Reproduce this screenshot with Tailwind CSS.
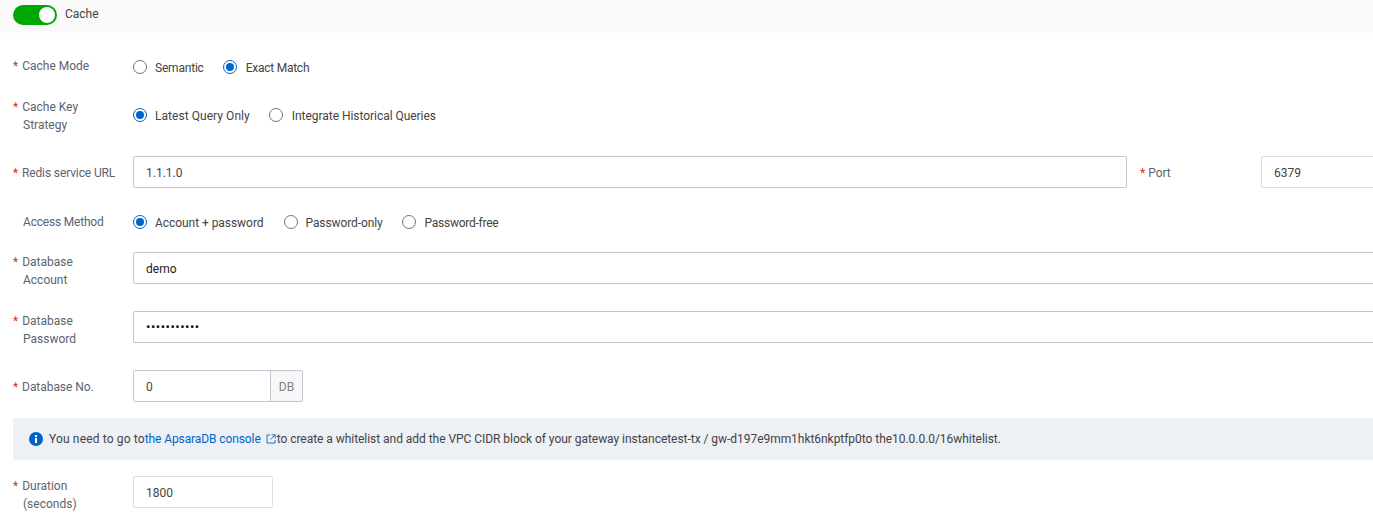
<!DOCTYPE html>
<html lang="en">
  <head>
    <meta charset="UTF-8" />
    <meta name="viewport" content="width=device-width, initial-scale=1.0" />
    <title>Cache settings</title>
    <script src="https://cdn.jsdelivr.net/npm/@tailwindcss/browser@4"></script>
  </head>

  <body class="bg-white overflow-hidden h-[524px] font-['Roboto',sans-serif] text-[12px] leading-[18px] text-[#333]">
    <!-- Section header -->
    <div class="flex items-center h-[33px] pb-[4px] pl-[13px] bg-[#fafafa]">
      <div class="flex justify-end items-center w-[44px] h-[20px] pr-[2px] rounded-full bg-[#00a700]">
        <div class="w-[16px] h-[16px] rounded-full bg-white"></div>
      </div>
      <span class="ml-[8px] text-[#444] relative top-[-1px]">Cache</span>
    </div>

    <div class="pl-[13px] w-[1500px]">
      <!-- Cache Mode -->
      <div class="flex items-center h-[32px] mt-[18px]">
        <div class="w-[120px] text-[#5c6370] relative top-[-1px]"><span class="text-[#d93026] mr-[1px]">*</span> Cache Mode</div>
        <div class="flex items-center">
          <span class="w-[14px] h-[14px] rounded-full border border-[#67778f] bg-white"></span>
          <span class="ml-[8px] text-[#444] relative top-[1px] tracking-[-0.2px]">Semantic</span>
          <span class="ml-[19px] flex items-center justify-center w-[14px] h-[14px] rounded-full border border-[#0064c8] bg-white"><span class="w-[8px] h-[8px] rounded-full bg-[#0064c8]"></span></span>
          <span class="ml-[9px] text-[#444] relative top-[1px] tracking-[-0.25px]">Exact Match</span>
        </div>
      </div>

      <!-- Cache Key Strategy -->
      <div class="flex items-start mt-[16px] h-[32px]">
        <div class="w-[120px] mt-[-1px] text-[#5c6370]"><span class="text-[#d93026] mr-[1px]">*</span> Cache Key<br /><span class="pl-[10px]">Strategy</span></div>
        <div class="flex items-center h-[32px]">
          <span class="flex items-center justify-center w-[14px] h-[14px] rounded-full border border-[#0064c8] bg-white"><span class="w-[8px] h-[8px] rounded-full bg-[#0064c8]"></span></span>
          <span class="ml-[8px] text-[#444] tracking-[0.05px] relative top-[1px]">Latest Query Only</span>
          <span class="ml-[19px] w-[14px] h-[14px] rounded-full border border-[#67778f] bg-white"></span>
          <span class="ml-[9px] text-[#444] tracking-[-0.04px] relative top-[1px]">Integrate Historical Queries</span>
        </div>
      </div>

      <!-- Redis URL + port -->
      <div class="flex items-center h-[32px] mt-[25px]">
        <div class="w-[120px] text-[#5c6370] tracking-[-0.12px] relative top-[1px]"><span class="text-[#d93026] mr-[1px]">*</span> Redis service URL</div>
        <div class="flex items-center w-[994px] h-[32px] pt-[2px] px-[12px] border border-[#c1c7d3] rounded-[2px] text-[#444]">1.1.1.0</div>
        <div class="w-[134px] pl-[13px] text-[#5c6370] relative top-[1px]"><span class="text-[#d93026]">*</span> Port</div>
        <div class="flex items-center w-[230px] h-[32px] pt-[2px] px-[12px] border border-[#dedede] rounded-[2px] text-[#444]">6379</div>
      </div>

      <!-- Access Method -->
      <div class="flex items-center h-[32px] mt-[18px]">
        <div class="w-[120px] pl-[10px] text-[#5c6370] tracking-[-0.2px]">Access Method</div>
        <div class="flex items-center">
          <span class="flex items-center justify-center w-[14px] h-[14px] rounded-full border border-[#0064c8] bg-white"><span class="w-[8px] h-[8px] rounded-full bg-[#0064c8]"></span></span>
          <span class="ml-[8px] text-[#444] tracking-[-0.05px] relative top-[1px]">Account + password</span>
          <span class="ml-[20px] w-[14px] h-[14px] rounded-full border border-[#67778f] bg-white"></span>
          <span class="ml-[8px] text-[#444] tracking-[-0.1px] relative top-[1px]">Password-only</span>
          <span class="ml-[19px] w-[14px] h-[14px] rounded-full border border-[#67778f] bg-white"></span>
          <span class="ml-[9px] text-[#444] tracking-[-0.26px] relative top-[1px]">Password-free</span>
        </div>
      </div>

      <!-- Database Account -->
      <div class="flex items-start h-[32px] mt-[14px]">
        <div class="w-[120px] pt-[1px] text-[#5c6370]"><span class="text-[#d93026] mr-[1px]">*</span> Database<br /><span class="pl-[10px]">Account</span></div>
        <div class="flex items-center w-[1300px] h-[32px] pt-[2px] px-[12px] border border-[#c1c7d3] rounded-[2px] text-[#222]">demo</div>
      </div>

      <!-- Database Password -->
      <div class="flex items-start h-[32px] mt-[27px]">
        <div class="w-[120px] pt-[1px] text-[#5c6370]"><span class="text-[#d93026] mr-[1px]">*</span> Database<br /><span class="pl-[10px]">Password</span></div>
        <div class="flex items-center w-[1300px] h-[32px] px-[12px] border border-[#c1c7d3] rounded-[2px] text-[#111] text-[13px] tracking-[0.5px]">•••••••••••</div>
      </div>

      <!-- Database No. -->
      <div class="flex items-center h-[32px] mt-[27px]">
        <div class="w-[120px] text-[#5c6370] tracking-[-0.05px] relative top-[1px]"><span class="text-[#d93026] mr-[1px]">*</span> Database No.</div>
        <div class="flex items-center w-[138px] h-[32px] pt-[2px] px-[12px] border border-[#c1c7d3] rounded-l-[2px] text-[#444]">0</div>
        <div class="flex items-center justify-center w-[33px] h-[32px] pt-[2px] ml-[-1px] border border-[#c1c7d3] rounded-r-[2px] bg-[#f7f7f7] text-[#808080]">DB</div>
      </div>

      <!-- Whitelist notice -->
      <div class="flex items-center w-[1400px] h-[42px] mt-[16px] pl-[16px] rounded-[2px] bg-[#edf0f5] text-[#444]">
        <svg class="w-[14px] h-[14px] shrink-0" viewBox="0 0 14 14">
          <circle cx="7" cy="7" r="7" fill="#0064c8" />
          <rect x="6" y="6" width="2" height="5" fill="#fff" />
          <rect x="6" y="3" width="2" height="2" fill="#fff" />
        </svg>
        <span class="ml-[6px] whitespace-nowrap tracking-[0.15px]">You need to go to<a href="#" class="text-[#0064c8] tracking-[-0.1px]">the ApsaraDB console</a></span>
        <svg class="w-[10px] h-[10px] ml-[5px] shrink-0" viewBox="0 0 10 10" fill="none" stroke="#0064c8" stroke-width="0.9">
          <path d="M4 1H1v8h8V6M5.5 .8h3.7v3.7M9 1 4.5 5.5" />
        </svg>
        <span class="ml-[1px] whitespace-nowrap tracking-[-0.04px]">to create a whitelist and add the VPC CIDR block of your gateway instancetest-tx / gw-d197e9mm1hkt6nkptfp0to the10.0.0.0/16whitelist.</span>
      </div>

      <!-- Duration -->
      <div class="flex items-start h-[32px] mt-[16px]">
        <div class="w-[120px] pt-[1px] text-[#5c6370]"><span class="text-[#d93026] mr-[1px]">*</span> Duration<br /><span class="pl-[10px]">(seconds)</span></div>
        <div class="flex items-center w-[140px] h-[32px] pt-[2px] px-[12px] border border-[#dedede] rounded-[2px] text-[#444]">1800</div>
      </div>
    </div>
  </body>
</html>
